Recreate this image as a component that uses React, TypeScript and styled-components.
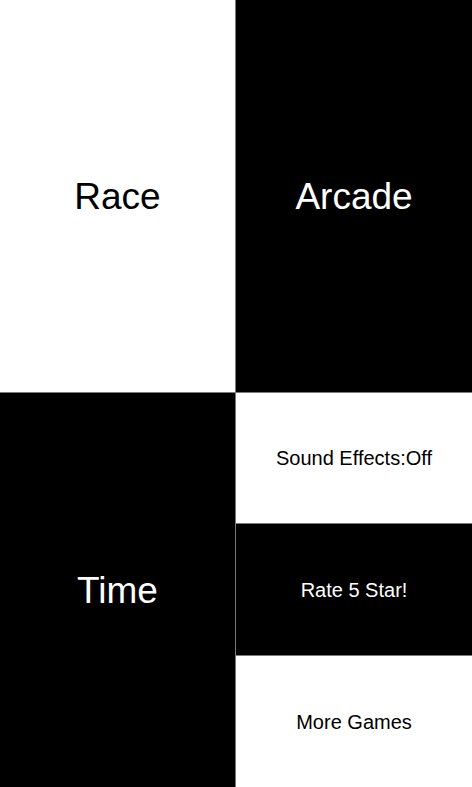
import React from "react";
import styled, { createGlobalStyle } from "styled-components";

const Global = createGlobalStyle`
  html, body { margin: 0; padding: 0; background: #000; }
  body { font-family: "Liberation Sans", Arial, Helvetica, sans-serif; }
  #root { width: 472px; height: 787px; }
`;

const Board = styled.div`
  display: grid;
  grid-template-columns: 235px 236px;
  grid-template-rows: 392px 394px;
  gap: 1px;
  width: 472px;
  height: 787px;
  background: #7a7a7a;
`;

const Stack = styled.div`
  display: grid;
  grid-template-rows: 130px 131px 131px;
  gap: 1px;
  background: #7a7a7a;
`;

const Tile = styled.div<{ $dark?: boolean; $big?: boolean }>`
  display: flex;
  align-items: center;
  justify-content: center;
  background: ${(p) => (p.$dark ? "#000" : "#fff")};
  color: ${(p) => (p.$dark ? "#fff" : "#000")};
  font-size: ${(p) => (p.$big ? "37px" : "20px")};
  line-height: 1;
  cursor: pointer;
  user-select: none;
`;

export default function App() {
  return (
    <>
      <Global />
      <Board>
        <Tile $big>Race</Tile>
        <Tile $big $dark>Arcade</Tile>
        <Tile $big $dark>Time</Tile>
        <Stack>
          <Tile>Sound Effects:Off</Tile>
          <Tile $dark>Rate 5 Star!</Tile>
          <Tile>More Games</Tile>
        </Stack>
      </Board>
    </>
  );
}
